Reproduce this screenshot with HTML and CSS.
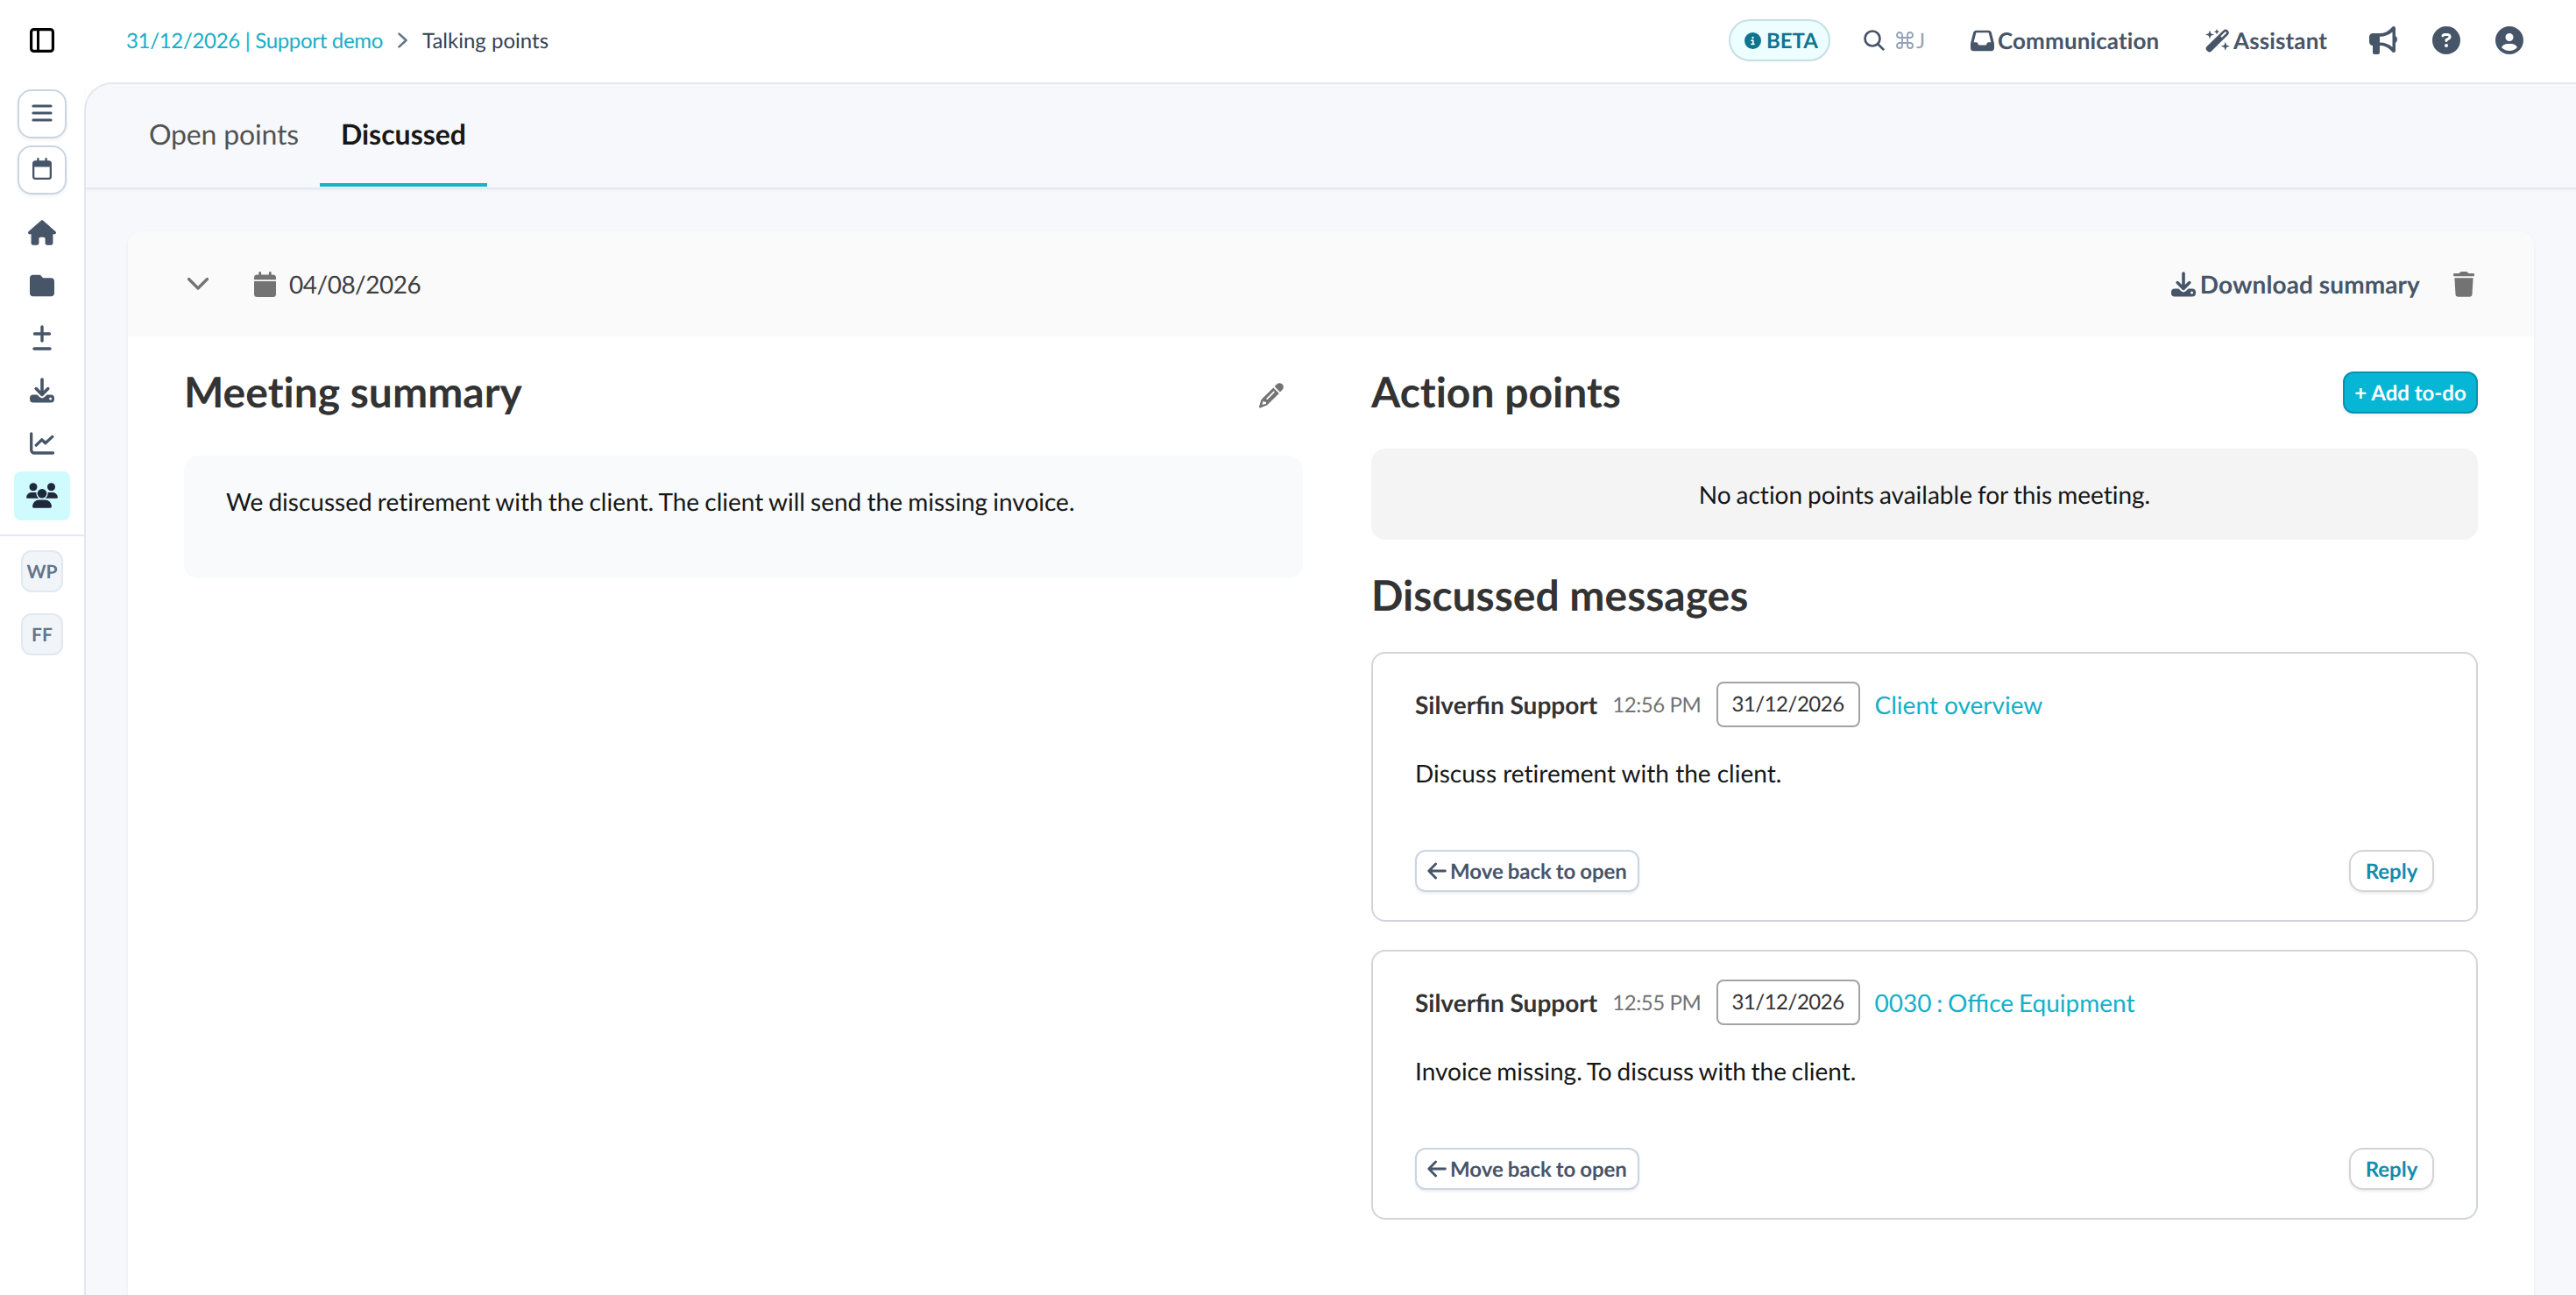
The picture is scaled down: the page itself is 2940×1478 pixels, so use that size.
FILE: index.html
```html
<!DOCTYPE html>
<html lang="en">
<head>
<meta charset="utf-8">
<title>Talking points</title>
<link rel="stylesheet" href="styles.css">
</head>
<body>
<svg class="defs" aria-hidden="true">
  <symbol id="i-download" viewBox="0 0 28 29">
    <path d="M14 2v17M7.2 12.600l6.800 6.800 6.800-6.800" fill="none" stroke="currentColor" stroke-width="3.600" stroke-linecap="round" stroke-linejoin="round"/>
    <path fill-rule="evenodd" fill="currentColor" d="M4 19.500h4.400l3 2.800a3.900 3.900 0 0 0 5.200 0l3-2.800H24a4 4 0 0 1 4 4v1a4 4 0 0 1-4 4H4a4 4 0 0 1-4-4v-1a4 4 0 0 1 4-4zm19.600 3a1.500 1.500 0 1 0 0 3 1.500 1.500 0 0 0 0-3z"/>
  </symbol>
  <symbol id="i-back" viewBox="0 0 22 20">
    <path d="M20.400 10H2M9.600 2L1.800 10l7.800 8" fill="none" stroke="currentColor" stroke-width="2.800" stroke-linecap="round" stroke-linejoin="round"/>
  </symbol>
</svg>
<div class="app">
  <aside class="sidebar">
    <div class="sidebar-top">
      <svg width="28" height="28" viewBox="0 0 28 28"><rect x="1.600" y="1.600" width="24.800" height="24.800" rx="3" fill="none" stroke="#000" stroke-width="3.200"/><path d="M9.500 1v26" stroke="#000" stroke-width="3"/></svg>
    </div>
    <div class="tools">
      <button class="tool"><svg width="24" height="22" viewBox="0 0 24 22"><path d="M2 3h20M2 11h20M2 19h20" stroke="currentColor" stroke-width="3.200" stroke-linecap="round"/></svg></button>
      <button class="tool"><svg width="22" height="26" viewBox="0 0 22 26"><path fill-rule="evenodd" fill="currentColor" d="M5.200 1.200a1.200 1.200 0 0 1 2.400 0V3.200h6.800V1.200a1.200 1.200 0 0 1 2.400 0V3.200H18.500A3.500 3.500 0 0 1 22 6.700V21.500a3.500 3.500 0 0 1-3.500 3.500h-15A3.500 3.500 0 0 1 0 21.500V6.700A3.500 3.500 0 0 1 3.500 3.200h1.700zM2.300 10.500v11a1.300 1.300 0 0 0 1.300 1.300h14.800a1.300 1.300 0 0 0 1.300-1.300v-11z"/></svg></button>
    </div>
    <nav class="nav">
      <a class="nav-item"><svg width="32" height="29" viewBox="0 0 576 512"><path fill="currentColor" d="M575.8 255.500c0 18-15 32.100-32 32.100h-32l.7 160.200c0 2.700-.2 5.400-.5 8.100V472c0 22.100-17.900 40-40 40H392c-22.100 0-40-17.900-40-40V384c0-17.700-14.300-32-32-32H256c-17.700 0-32 14.300-32 32v88c0 22.100-17.900 40-40 40H104c-22.100 0-40-17.900-40-40V287.600H32c-18 0-32-14-32-32.100c0-9 3-17 10-24L266.400 8c7-7 15-8 22-8s15 2 21 7L564.800 231.500c8 7 12 15 11 24z"/></svg></a>
      <a class="nav-item"><svg width="28" height="28" viewBox="0 0 512 512"><path fill="currentColor" d="M64 480H448c35.300 0 64-28.700 64-64V160c0-35.300-28.700-64-64-64H288c-10.100 0-19.600-4.700-25.600-12.800L243.200 57.600C231.100 41.500 212.100 32 192 32H64C28.700 32 0 60.700 0 96V416c0 35.300 28.700 64 64 64z"/></svg></a>
      <a class="nav-item"><svg width="22" height="29" viewBox="0 0 22 29"><path d="M11 2v16M2.500 10h17M2 27h18" stroke="currentColor" stroke-width="3.400" stroke-linecap="round"/></svg></a>
      <a class="nav-item"><svg width="28" height="29"><use href="#i-download"/></svg></a>
      <a class="nav-item"><svg width="28" height="26" viewBox="0 0 28 26"><path d="M1.700 2v18.500a3.500 3.500 0 0 0 3.500 3.500h21.300M7.300 15.200l6.400-6.400 4.100 4 8-7.400" fill="none" stroke="currentColor" stroke-width="3.300" stroke-linecap="round" stroke-linejoin="round"/></svg></a>
      <a class="nav-item active"><svg width="36" height="29" viewBox="0 0 36 29"><g fill="currentColor"><circle cx="8" cy="4.700" r="4.500"/><circle cx="28.500" cy="4.700" r="4.500"/><path d="M6.500 11h4.500c.8 0 1.500.1 2.200.4a7 7 0 0 0 .9 6.400H1.300A1.200 1.200 0 0 1 .1 16.600 6 6 0 0 1 6.500 11zM29.500 11H25c-.8 0-1.500.1-2.200.4a7 7 0 0 1-.9 6.400h12.800a1.200 1.200 0 0 0 1.200-1.200A6 6 0 0 0 29.500 11z"/><circle cx="18" cy="12.200" r="6.600" fill="#cffafe"/><circle cx="18" cy="12.200" r="5.300"/><path d="M14.500 19.500h7a7.500 7.500 0 0 1 7.500 7.500 1.700 1.700 0 0 1-1.700 1.700H8.700A1.700 1.700 0 0 1 7 27a7.500 7.500 0 0 1 7.500-7.500z"/></g></svg></a>
    </nav>
    <div class="workspaces">
      <span class="badge">WP</span>
      <span class="badge">FF</span>
    </div>
  </aside>

  <div class="page">
    <header class="topbar">
      <div class="crumbs">
        <a class="link period">31/12/2026 | Support demo</a>
        <svg width="13" height="18" viewBox="0 0 13 18"><path d="M2.500 1.600L10.500 9l-8 7.400" fill="none" stroke="#64748b" stroke-width="2.600" stroke-linecap="round" stroke-linejoin="round"/></svg>
        <span>Talking points</span>
      </div>
      <div class="actions">
        <span class="beta"><svg width="19" height="19" viewBox="0 0 512 512"><path fill="currentColor" d="M256 512A256 256 0 1 0 256 0a256 256 0 1 0 0 512zM216 336h24V272H216c-13.300 0-24-10.700-24-24s10.700-24 24-24h48c13.300 0 24 10.700 24 24v88h8c13.300 0 24 10.700 24 24s-10.700 24-24 24H216c-13.300 0-24-10.700-24-24s10.700-24 24-24zm40-208a32 32 0 1 1 0 64 32 32 0 1 1 0-64z"/></svg>BETA</span>
        <span class="search"><svg width="24" height="24" viewBox="0 0 24 24"><g fill="none" stroke="currentColor" stroke-width="2.700" stroke-linecap="round"><circle cx="10" cy="10" r="8.500"/><path d="M16.200 16.200l6.200 6.200"/></g></svg><span class="shortcut"><svg width="20" height="20" viewBox="0 0 20 20"><path d="M7 7V4a3 3 0 1 0-3 3h12a3 3 0 1 0-3-3v12a3 3 0 1 0 3-3H4a3 3 0 1 0 3 3z" fill="none" stroke="currentColor" stroke-width="1.900"/></svg>J</span></span>
        <a class="menu communication"><svg width="27" height="27" viewBox="0 0 512 512"><path fill="currentColor" d="M121 32C91.600 32 66 52 58.900 80.500L1.900 308.400C.6 313.500 0 318.700 0 323.900V416c0 35.300 28.700 64 64 64H448c35.300 0 64-28.700 64-64V323.900c0-5.200-.6-10.400-1.900-15.500l-57-227.900C446 52 420.400 32 391 32H121zm0 48H391l52 208H387.800c-12.100 0-23.200 6.800-28.600 17.700l-14.300 28.600c-5.400 10.800-16.500 17.700-28.600 17.700H195.800c-12.100 0-23.200-6.800-28.600-17.700l-14.300-28.600c-5.400-10.800-16.500-17.700-28.600-17.700H69L121 80z"/></svg>Communication</a>
        <a class="menu assistant"><svg width="28" height="27" viewBox="0 0 28 27"><path d="M4.500 22.500L23 4.300" stroke="currentColor" stroke-width="7.400" stroke-linecap="round"/><path d="M18.700 8.500L23 4.300" stroke="#fff" stroke-width="2.200" stroke-linecap="round"/><path fill="currentColor" d="M5 1.500l1.300 3.700L10 6.500 6.300 7.800 5 11.500 3.700 7.800 0 6.500l3.700-1.300zM13 0l.9 2.300 2.300.9-2.300.9L13 6.400l-.9-2.300-2.300-.9 2.300-.9zM22.800 14.800l1.300 3.700 3.700 1.300-3.700 1.300-1.300 3.700-1.300-3.700-3.700-1.300 3.700-1.300z"/></svg>Assistant</a>
        <svg class="round" width="32" height="32" viewBox="0 0 512 512"><path fill="currentColor" d="M480 32c0-12.900-7.800-24.600-19.800-29.600s-25.700-2.200-34.900 6.900L381.700 53c-48 48-113.100 75-181 75H64c-35.300 0-64 28.700-64 64v96c0 35.300 28.700 64 64 64l0 128c0 17.700 14.300 32 32 32h64c17.700 0 32-14.300 32-32V352l8.700 0c67.900 0 133 27 181 75l43.600 43.600c9.200 9.200 22.900 11.900 34.900 6.900s19.800-16.600 19.800-29.600V300.400c18.600-8.800 32-32.500 32-60.400s-13.400-51.600-32-60.400V32zm-56 70V240 378C365 325 280.500 294 200.700 294H192V186h8.700c79.800 0 164-31 223.300-84z"/></svg>
        <svg class="round" width="32" height="32" viewBox="0 0 512 512"><path fill="currentColor" d="M256 512A256 256 0 1 0 256 0a256 256 0 1 0 0 512zM169.800 165.300c7.900-22.300 29.100-37.300 52.800-37.300h58.300c34.900 0 63.100 28.300 63.100 63.100c0 22.600-12.100 43.500-31.700 54.800L280 264.400c-.2 13-10.900 23.600-24 23.600c-13.300 0-24-10.700-24-24V250.500c0-8.600 4.600-16.500 12.100-20.800l44.300-25.400c4.700-2.700 7.600-7.700 7.600-13.100c0-8.400-6.800-15.100-15.100-15.100H222.600c-3.400 0-6.400 2.100-7.500 5.300l-.4 1.200c-4.400 12.500-18.200 19-30.600 14.600s-19-18.200-14.600-30.600l.4-1.200zM224 352a32 32 0 1 1 64 0 32 32 0 1 1 -64 0z"/></svg>
        <svg class="round" width="32" height="32" viewBox="0 0 512 512"><path fill="currentColor" d="M399 384.200C376.900 345.800 335.400 320 288 320H224c-47.400 0-88.900 25.800-111 64.200c35.200 39.200 86.200 63.800 143 63.800s107.800-24.700 143-63.800zM0 256a256 256 0 1 1 512 0A256 256 0 1 1 0 256zm256 16a72 72 0 1 0 0-144 72 72 0 1 0 0 144z"/></svg>
      </div>
    </header>

    <main class="content">
      <nav class="tabs">
        <a class="tab">Open points</a>
        <a class="tab selected">Discussed</a>
      </nav>
      <section class="meeting">
        <header class="meeting-head">
          <svg width="28" height="16" viewBox="0 0 28 16"><path d="M3.500 2.500L14 13 24.500 2.500" fill="none" stroke="#737373" stroke-width="3.200" stroke-linecap="round" stroke-linejoin="round"/></svg>
          <svg class="cal" width="25" height="29" viewBox="0 0 25 29"><path fill="#737373" d="M5.300 1.400a1.400 1.400 0 0 1 2.800 0V3.500h8.800V1.400a1.400 1.400 0 0 1 2.800 0V3.500H21.500A3.500 3.500 0 0 1 25 7v2.200H0V7a3.500 3.500 0 0 1 3.500-3.500h1.800zM0 11h25v14.500a3.500 3.500 0 0 1-3.500 3.500h-18A3.500 3.500 0 0 1 0 25.500z"/></svg>
          <span class="date">04/08/2026</span>
          <a class="download"><svg width="28" height="29"><use href="#i-download"/></svg>Download summary</a>
          <svg class="trash" width="24" height="29" viewBox="0 0 24 29"><path fill="#737373" d="M1.300 2H6.500L8 .6A2 2 0 0 1 9.400 0h5.200A2 2 0 0 1 16 .6L17.500 2h5.200a1.300 1.300 0 0 1 1.300 1.300v.6a1.300 1.300 0 0 1-1.300 1.300H1.300A1.300 1.300 0 0 1 0 3.900v-.6A1.300 1.300 0 0 1 1.300 2zM1.400 7.300h21.200l-1.100 18.800a3 3 0 0 1-3 2.700h-13a3 3 0 0 1-3-2.700z"/></svg>
        </header>
        <div class="meeting-body">
          <div class="summary">
            <div class="row">
              <h2>Meeting summary</h2>
              <svg class="edit" width="28" height="29" viewBox="0 0 28 29"><path fill="#737373" fill-rule="evenodd" d="M16.300 5.400l6.500 6.500L10 24.600a6 6 0 0 1-2.300 1.500L1.400 28.400A1 1 0 0 1 .1 27.100L2 20.500A6 6 0 0 1 3.500 18zM17.600 4.100l2.700-2.700a4.300 4.300 0 0 1 6.100 6.500l-2.500 2.700zM16.200 9.800l-7.600 7.600a.9.900 0 0 0 1.300 1.300l7.600-7.600a.9.900 0 0 0-1.300-1.300zM4.600 20.700l-1.100 4.400 4.500-1.300V21.700H6.700z"/></svg>
            </div>
            <div class="note">We discussed retirement with the client. The client will send the missing invoice.</div>
          </div>
          <div class="points">
            <div class="row">
              <h2>Action points</h2>
              <button class="add">+ Add to-do</button>
            </div>
            <div class="empty">No action points available for this meeting.</div>
            <div class="row"><h2>Discussed messages</h2></div>
            <div class="messages">
              <article class="message">
                <div class="meta"><b>Silverfin Support</b><span class="time">12:56 PM</span><span class="chip">31/12/2026</span><a class="link">Client overview</a></div>
                <p>Discuss retirement with the client.</p>
                <div class="row"><button class="btn move"><svg width="22" height="20"><use href="#i-back"/></svg>Move back to open</button><button class="btn reply">Reply</button></div>
              </article>
              <article class="message">
                <div class="meta"><b>Silverfin Support</b><span class="time">12:55 PM</span><span class="chip">31/12/2026</span><a class="link tight">0030 : Office Equipment</a></div>
                <p class="tight">Invoice missing. To discuss with the client.</p>
                <div class="row"><button class="btn move"><svg width="22" height="20"><use href="#i-back"/></svg>Move back to open</button><button class="btn reply">Reply</button></div>
              </article>
            </div>
          </div>
        </div>
      </section>
    </main>
  </div>
</div>
</body>
</html>
```
FILE: styles.css
```css
* { box-sizing: border-box; }
body { margin: 0; background: #fff; font-family: Lato, sans-serif; font-size: 28px; color: #171717; overflow: hidden; text-rendering: geometricPrecision; font-feature-settings: "liga" 0; }
svg { display: block; flex: none; }
button { font-family: inherit; font-feature-settings: inherit; text-rendering: inherit; white-space: nowrap; }
h2, p { margin: 0; }
.defs { display: none; }
.app { display: flex; height: 1478px; }
.row { display: flex; justify-content: space-between; align-items: center; height: 48px; }
.link { color: #15afca; }
.tight { word-spacing: -1.4px; }

/* Sidebar */
.sidebar { width: 96px; flex: none; display: flex; flex-direction: column; color: #475569; }
.sidebar-top { height: 102px; display: flex; justify-content: center; padding-top: 32px; }
.tools { display: flex; flex-direction: column; align-items: center; gap: 8px; }
.tool { width: 56px; height: 56px; padding: 0 0 2px; display: flex; align-items: center; justify-content: center; background: #fff; border: 2px solid #cbd5e1; border-radius: 16px; box-shadow: 0 2px 4px rgba(15, 23, 42, .06); color: inherit; }
.nav { display: flex; flex-direction: column; align-items: center; gap: 4px; padding: 16px 0; border-bottom: 2px solid #e2e8f0; }
.nav-item { width: 64px; height: 56px; padding-bottom: 1px; display: flex; align-items: center; justify-content: center; border-radius: 8px; }
.nav-item.active { background: #cffafe; color: #1e293b; }
.workspaces { display: flex; flex-direction: column; align-items: center; gap: 24px; padding-top: 16px; }
.badge { width: 48px; height: 48px; display: flex; align-items: center; justify-content: center; background: #f1f5f9; border: 2px solid #e2e8f0; border-radius: 12px; font-size: 21px; font-weight: 700; color: #64748b; }

/* Top bar */
.page { flex: 1; min-width: 0; display: flex; flex-direction: column; }
.topbar { height: 94px; flex: none; display: flex; justify-content: space-between; align-items: center; padding: 0 60px 2px 48px; font-size: 24px; color: #334155; }
.crumbs { display: flex; align-items: center; gap: 16px; }
.period { letter-spacing: -.32px; }
.actions { display: flex; align-items: center; color: #475569; }
.beta { display: flex; align-items: center; gap: 6px; width: 116px; height: 48px; padding-left: 16px; margin-right: 38px; background: #ecfeff; border: 2px solid #c5dfe3; border-radius: 24px; color: #0e7490; font-weight: 700; }
.search { display: flex; align-items: center; gap: 13px; width: 122px; }
.shortcut { display: flex; align-items: center; gap: 3px; color: #94a3b8; }
.menu { display: flex; align-items: center; gap: 4px; font-size: 26px; font-weight: 700; letter-spacing: .12px; }
.communication { width: 268px; }
.assistant { width: 187px; }
.round + .round { margin-left: 40px; }

/* Content */
.content { flex: 1; min-height: 0; display: flex; flex-direction: column; border: solid #e2e8f0; border-width: 2px 0 0 2px; border-top-left-radius: 32px; background: #f7f8fc; }
.tabs { height: 120px; flex: none; display: flex; padding: 0 48px; border-bottom: 2px solid #e2e8f0; box-shadow: 0 2px 4px rgba(15, 23, 42, .03); font-size: 32px; color: #525252; }
.tab { height: 117px; padding: 0 24px; line-height: 114px; border-bottom: 4px solid transparent; letter-spacing: -.18px; }
.tab.selected { border-color: #1bb0cc; color: #171717; font-weight: 700; letter-spacing: 0; }
.meeting { flex: 1; min-height: 0; margin: 48px 48px 0; background: #fff; border-radius: 16px 16px 0 0; box-shadow: 0 1px 4px rgba(15, 23, 42, .05); }
.meeting-head { height: 120px; display: flex; align-items: center; padding: 0 68px 0 66px; background: #fafafa; border-radius: 16px 16px 0 0; color: #404040; }
.cal { margin: 0 15px 0 50px; }
.date { letter-spacing: -.5px; }
.download { display: flex; align-items: center; gap: 5px; margin: 0 38px 0 auto; color: #475569; font-weight: 700; letter-spacing: .1px; }
.meeting-body { display: flex; justify-content: space-between; padding: 40px 64px; }
h2 { font-size: 48px; line-height: 48px; font-weight: 700; color: #333; }
.summary { width: 1277px; }
.edit { margin: 6px 22px 0 0; }
.note { height: 140px; margin-top: 48px; padding: 35px 48px; line-height: 34px; border-radius: 16px; background: #f8fafc; word-spacing: -.95px; }
.points { width: 1263px; }
.add { width: 154px; height: 48px; padding: 0; background: #06b6d4; border: 2px solid #0891b2; border-radius: 12px; box-shadow: 0 2px 4px rgba(15, 23, 42, .06); color: #fff; font-size: 24px; font-weight: 700; }
.empty { height: 104px; margin: 40px 0; display: flex; align-items: center; justify-content: center; border-radius: 16px; background: #f4f4f4; word-spacing: -1.2px; }
.messages { display: flex; flex-direction: column; gap: 32px; margin-top: 40px; }
.message { height: 308px; padding: 32px 48px; border: 2px solid #d1d5db; border-radius: 16px; display: flex; flex-direction: column; }
.meta { display: flex; align-items: center; gap: 17px; height: 52px; color: #333; font-feature-settings: normal; font-variant-ligatures: common-ligatures; }
.time { font-size: 24px; color: #737373; letter-spacing: -.4px; }
.meta .link { color: #15afca; }
.chip { height: 52px; padding: 0 16px; line-height: 48px; font-size: 24px; letter-spacing: -.5px; border: 2px solid #a3a3a3; border-radius: 8px; }
.message p { margin: 35px 0 auto; line-height: 34px; }
.btn { height: 48px; padding: 0 12px; display: flex; align-items: center; gap: 4px; background: #fff; border: 2px solid #cbd5e1; border-radius: 12px; box-shadow: 0 2px 3px rgba(15, 23, 42, .08); color: #475569; font-size: 24px; font-weight: 700; word-spacing: -1px; }
.reply { width: 97px; padding: 0; justify-content: center; border-color: #d4d4d4; border-radius: 16px; color: #138dac; }
```
